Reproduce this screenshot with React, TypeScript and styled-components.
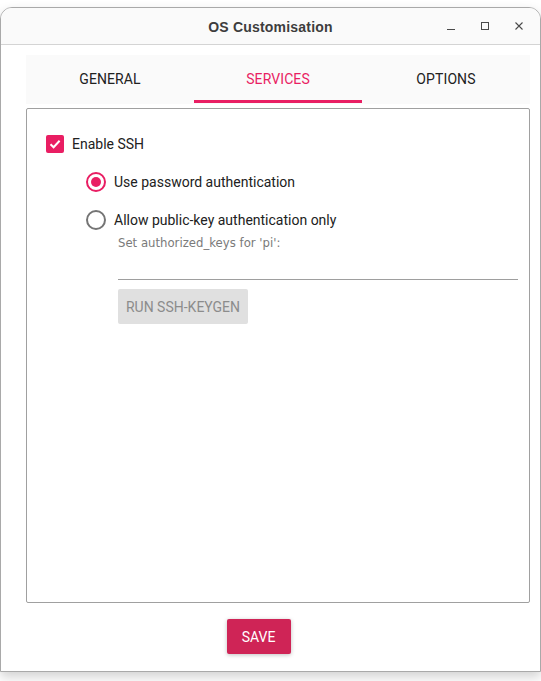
import React, { useState } from "react";
import styled, { createGlobalStyle } from "styled-components";

const Global = createGlobalStyle`
  html, body { margin: 0; padding: 0; background: #ffffff; }
  body { width: 541px; height: 681px; overflow: hidden; font-family: Roboto, "Liberation Sans", sans-serif; }
  * { box-sizing: border-box; }
`;

const Window = styled.div`
  margin-top: 7px;
  width: 541px;
  height: 665px;
  border: 1px solid #a9a9a9;
  border-radius: 12px 12px 0 0;
  background: #ffffff;
  box-shadow: 0 5px 12px rgba(0, 0, 0, 0.18);
  display: flex;
  flex-direction: column;
  overflow: hidden;
`;

const TitleBar = styled.div`
  height: 37px;
  flex: none;
  background: #fafafa;
  border-bottom: 1px solid #d4d4d4;
  position: relative;
  display: flex;
  align-items: center;
  justify-content: center;
`;

const Title = styled.div`
  font-family: "Liberation Sans", "DejaVu Sans", sans-serif;
  font-weight: 700;
  font-size: 14px;
  color: #3d3d3d;
  letter-spacing: 0.2px;
  margin-top: 1px;
`;

const Controls = styled.div`
  position: absolute;
  right: 4px;
  top: 0;
  height: 100%;
  display: flex;
  align-items: center;
`;

const Ctl = styled.div`
  width: 34px;
  height: 36px;
  display: flex;
  align-items: center;
  justify-content: center;
  color: #4a4a4a;
`;

const Body = styled.div`
  flex: 1;
  display: flex;
  flex-direction: column;
  padding: 10px 10px 0 25px;
`;

const TabBar = styled.div`
  height: 49px;
  width: 504px;
  background: #fafafa;
  display: grid;
  grid-template-columns: repeat(3, 1fr);
  padding-bottom: 1px;
  flex: none;
`;

const Tab = styled.div<{ $active?: boolean }>`
  display: flex;
  align-items: center;
  justify-content: center;
  font-family: Roboto, sans-serif;
  font-size: 14px;
  font-weight: 400;
  color: ${(p) => (p.$active ? "#e91e63" : "#212121")};
  border-bottom: 3px solid ${(p) => (p.$active ? "#e91e63" : "transparent")};
  padding-top: 3px;
  letter-spacing: 0.1px;
`;

const Frame = styled.div`
  margin-top: 4px;
  width: 504px;
  height: 495px;
  border: 1px solid #a0a0a0;
  border-radius: 2px;
  background: #fff;
  padding: 26px 11px 0 19px;
  display: flex;
  flex-direction: column;
  flex: none;
`;

const CheckRow = styled.label`
  display: flex;
  align-items: center;
  gap: 8px;
  height: 18px;
  font-size: 14px;
  color: #212121;
`;

const CheckBox = styled.span`
  width: 18px;
  height: 18px;
  border-radius: 2px;
  background: #e91e63;
  display: flex;
  align-items: center;
  justify-content: center;
`;

const RadioGroup = styled.div`
  margin-left: 40px;
  margin-top: 19px;
  display: flex;
  flex-direction: column;
  gap: 18px;
`;

const RadioRow = styled.label`
  display: flex;
  align-items: center;
  gap: 8px;
  height: 20px;
  font-size: 14px;
  color: #212121;
  cursor: pointer;
`;

const Radio = styled.span<{ $on?: boolean }>`
  width: 20px;
  height: 20px;
  border-radius: 50%;
  border: 2px solid ${(p) => (p.$on ? "#e91e63" : "#757575")};
  display: flex;
  align-items: center;
  justify-content: center;
  &::after {
    content: "";
    width: 10px;
    height: 10px;
    border-radius: 50%;
    background: ${(p) => (p.$on ? "#e91e63" : "transparent")};
  }
`;

const KeySection = styled.div`
  margin-left: 72px;
  margin-top: 5px;
  display: flex;
  flex-direction: column;
  align-items: flex-start;
`;

const KeyLabel = styled.div`
  font-family: "DejaVu Sans", sans-serif;
  font-size: 11.7px;
  line-height: 16px;
  color: #7a7a7a;
`;

const KeyField = styled.div`
  width: 400px;
  height: 29px;
  border-bottom: 1px solid #9e9e9e;
`;

const GreyButton = styled.div`
  margin-top: 9px;
  width: 130px;
  height: 35px;
  border-radius: 2px;
  background: #e0e0e0;
  color: #8c8c8c;
  font-size: 14px;
  display: flex;
  align-items: center;
  justify-content: center;
`;

const Footer = styled.div`
  display: flex;
  justify-content: center;
  padding: 16px 24px 0 0;
  margin-left: -25px;
  margin-right: -10px;
`;

const SaveButton = styled.button`
  width: 64px;
  height: 35px;
  border: none;
  border-radius: 2px;
  background: #cf2456;
  color: #ffffff;
  font-family: Roboto, sans-serif;
  font-size: 14px;
  box-shadow: 0 1px 4px rgba(0, 0, 0, 0.25);
  padding: 0;
`;

export default function App() {
  const [auth, setAuth] = useState<"pw" | "key">("pw");
  return (
    <>
      <Global />
      <Window>
        <TitleBar>
          <Title>OS Customisation</Title>
          <Controls>
            <Ctl>
              <svg width="10" height="10" viewBox="0 0 10 10">
                <line x1="1" y1="8.5" x2="9" y2="8.5" stroke="#4a4a4a" strokeWidth="1" />
              </svg>
            </Ctl>
            <Ctl>
              <svg width="10" height="10" viewBox="0 0 10 10">
                <rect x="1.5" y="1.5" width="7" height="7" fill="none" stroke="#4a4a4a" strokeWidth="1" />
              </svg>
            </Ctl>
            <Ctl>
              <svg width="10" height="10" viewBox="0 0 10 10">
                <path d="M1.5 1.5 L8.5 8.5 M8.5 1.5 L1.5 8.5" stroke="#4a4a4a" strokeWidth="1.1" />
              </svg>
            </Ctl>
          </Controls>
        </TitleBar>
        <Body>
          <TabBar>
            <Tab>GENERAL</Tab>
            <Tab $active>SERVICES</Tab>
            <Tab>OPTIONS</Tab>
          </TabBar>
          <Frame>
            <CheckRow>
              <CheckBox>
                <svg width="14" height="14" viewBox="0 0 14 14">
                  <path d="M2.5 7.2 L5.6 10.2 L11.6 3.8" fill="none" stroke="#fff" strokeWidth="2" />
                </svg>
              </CheckBox>
              Enable SSH
            </CheckRow>
            <RadioGroup>
              <RadioRow onClick={() => setAuth("pw")}>
                <Radio $on={auth === "pw"} />
                Use password authentication
              </RadioRow>
              <RadioRow onClick={() => setAuth("key")}>
                <Radio $on={auth === "key"} />
                Allow public-key authentication only
              </RadioRow>
            </RadioGroup>
            <KeySection>
              <KeyLabel>Set authorized_keys for 'pi':</KeyLabel>
              <KeyField />
              <GreyButton>RUN SSH-KEYGEN</GreyButton>
            </KeySection>
          </Frame>
          <Footer>
            <SaveButton>SAVE</SaveButton>
          </Footer>
        </Body>
      </Window>
    </>
  );
}
